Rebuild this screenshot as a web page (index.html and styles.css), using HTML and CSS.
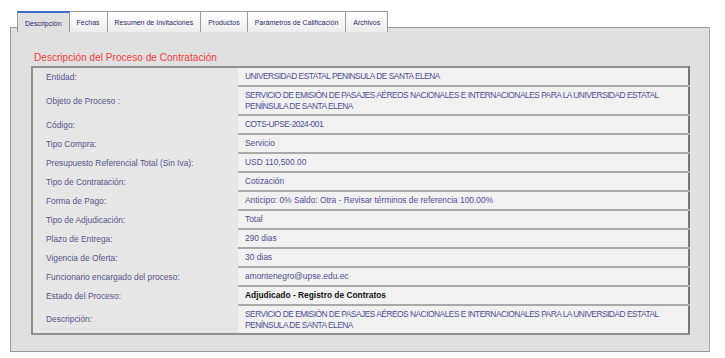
FILE: index.html
```html
<!DOCTYPE html>
<html lang="es">
<head>
    <meta charset="UTF-8">
    <title>Descripción del Proceso</title>
    <link rel="stylesheet" href="styles.css">
</head>
<body>

    <ul class="tabs">
        <li class="tab active">Descripción</li>
        <li class="tab">Fechas</li>
        <li class="tab">Resumen de Invitaciones</li>
        <li class="tab">Productos</li>
        <li class="tab">Parámetros de Calificación</li>
        <li class="tab">Archivos</li>
    </ul>

    <div class="panel">
        <h3 class="panel-title">Descripción del Proceso de Contratación</h3>
        <table class="info">
            <colgroup><col class="col-lbl"><col></colgroup>
            <tr><td class="lbl">Entidad:</td><td class="val caps">UNIVERSIDAD ESTATAL PENINSULA DE SANTA ELENA</td></tr>
            <tr class="tall"><td class="lbl">Objeto de Proceso :</td><td class="val caps">SERVICIO DE EMISIÓN DE PASAJES AÉREOS NACIONALES E INTERNACIONALES PARA LA UNIVERSIDAD ESTATAL PENÍNSULA DE SANTA ELENA</td></tr>
            <tr><td class="lbl">Código:</td><td class="val caps">COTS-UPSE-2024-001</td></tr>
            <tr><td class="lbl">Tipo Compra:</td><td class="val">Servicio</td></tr>
            <tr><td class="lbl">Presupuesto Referencial Total (Sin Iva):</td><td class="val">USD 110,500.00</td></tr>
            <tr><td class="lbl">Tipo de Contratación:</td><td class="val">Cotización</td></tr>
            <tr><td class="lbl">Forma de Pago:</td><td class="val">Anticipo: 0% Saldo: Otra - Revisar términos de referencia 100.00%</td></tr>
            <tr><td class="lbl">Tipo de Adjudicación:</td><td class="val">Total</td></tr>
            <tr><td class="lbl">Plazo de Entrega:</td><td class="val">290 dias</td></tr>
            <tr><td class="lbl">Vigencia de Oferta:</td><td class="val">30 dias</td></tr>
            <tr><td class="lbl">Funcionario encargado del proceso:</td><td class="val">amontenegro@upse.edu.ec</td></tr>
            <tr><td class="lbl">Estado del Proceso:</td><td class="val strong">Adjudicado - Registro de Contratos</td></tr>
            <tr class="tall"><td class="lbl">Descripción:</td><td class="val caps">SERVICIO DE EMISIÓN DE PASAJES AÉREOS NACIONALES E INTERNACIONALES PARA LA UNIVERSIDAD ESTATAL PENÍNSULA DE SANTA ELENA</td></tr>
        </table>
    </div>

</body>
</html>
```

FILE: styles.css
```css
body { margin: 0; background: #fff; font-family: "Liberation Sans", Arial, sans-serif; }

.tabs { list-style: none; margin: 11px 0 0 0; padding: 0 0 0 17px; display: flex; position: relative; z-index: 1; }
.tab { font-size: 7px; color: #2a2a6a; height: 20px; line-height: 21px; padding: 0 7px; border: 1px solid #9a9a9a; border-bottom: none; border-left: none; background: linear-gradient(#ffffff, #ececec); }
.tab:first-child { border-left: 1px solid #9a9a9a; }
.tab.active { background: #e0e0e0; border-top: 2px solid #3a6fd0; height: 19px; }

.panel { margin: -5px 15px 0 10px; height: 325px; border: 1px solid #999; border-right-color: #a8a8a8; background: #e0e0e0; padding: 23px 18px 0 20px; box-sizing: border-box; }

.panel-title { margin: 0 0 1px 3px; font-size: 10.1px; font-weight: normal; color: #f03c3c; line-height: 14px; }

.info { width: 659px; table-layout: fixed; border-collapse: collapse; border: 2px solid #8f8f8f; border-right-color: #777; background: #e6e6e6; font-size: 8.4px; }
.col-lbl { width: 206px; }
.info td { padding: 0 18px 0 7px; height: 17px; }
.info tr.tall td { height: 27px; }
.info td.lbl { color: #55558a; padding-left: 13px; padding-right: 0; }
.val { color: #4e4e92; background: #f1f1f1; border-bottom: 2px solid #a9a9a9; line-height: 11px; }
.val.caps { letter-spacing: -0.5px; }
.info tr:last-child .val { border-bottom: none; }
.val.strong { color: #111; font-weight: bold; }
```
